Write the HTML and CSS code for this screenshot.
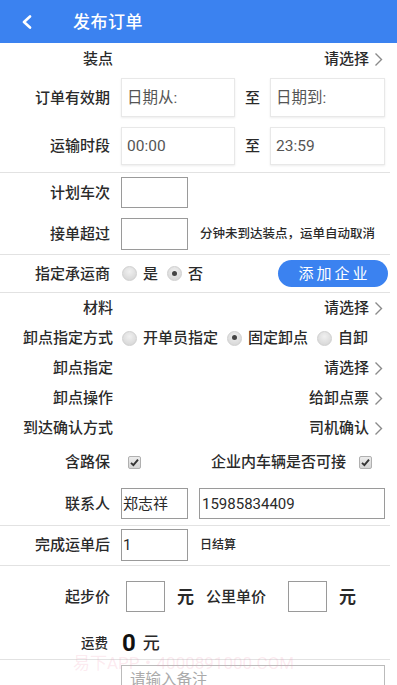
FILE: index.html
```html
<!DOCTYPE html>
<html lang="zh">
<head>
<meta charset="utf-8">
<title>发布订单</title>
<link rel="stylesheet" href="styles.css">
</head>
<body>
<div class="page">
  <header class="header">
    <svg class="back" width="12" height="14" viewBox="0 0 12 14"><polyline points="9,1.5 3,7 9,12.5" fill="none" stroke="#fff" stroke-width="2.6" stroke-linecap="round" stroke-linejoin="round"/></svg>
    <div class="title">发布订单</div>
  </header>

  <div class="sel-row first">
    <div class="lbl w113">装点</div>
    <div class="val">请选择<svg class="chev" width="9" height="15" viewBox="0 0 9 15"><polyline points="1.5,1.5 7.5,7.5 1.5,13.5" fill="none" stroke="#8a8a8a" stroke-width="1.4"/></svg></div>
  </div>

  <div class="pair-row r1">
    <div class="lbl">订单有效期</div>
    <div class="box soft b1">日期从:</div>
    <div class="to">至</div>
    <div class="box soft b2">日期到:</div>
  </div>
  <div class="pair-row r2">
    <div class="lbl">运输时段</div>
    <div class="box soft b1">00:00</div>
    <div class="to">至</div>
    <div class="box soft b2">23:59</div>
  </div>

  <div class="sep s1"></div>

  <div class="in-row r3">
    <div class="lbl">计划车次</div>
    <div class="box hard small"></div>
  </div>
  <div class="in-row r4">
    <div class="lbl">接单超过</div>
    <div class="box hard small"></div>
    <div class="note">分钟未到达装点，运单自动取消</div>
  </div>

  <div class="sep s2"></div>

  <div class="carrier-row">
    <div class="lbl">指定承运商</div>
    <div class="radios">
      <span class="radio"></span><span class="rtext">是</span>
      <span class="radio on"></span><span class="rtext">否</span>
    </div>
    <div class="btn">添加企业</div>
  </div>

  <div class="sep"></div>

  <div class="sel-row">
    <div class="lbl w113">材料</div>
    <div class="val">请选择<svg class="chev" width="9" height="15" viewBox="0 0 9 15"><polyline points="1.5,1.5 7.5,7.5 1.5,13.5" fill="none" stroke="#8a8a8a" stroke-width="1.4"/></svg></div>
  </div>
  <div class="sel-row">
    <div class="lbl w113">卸点指定方式</div>
    <div class="radios wide">
      <span class="radio"></span><span class="rtext">开单员指定</span>
      <span class="radio on"></span><span class="rtext">固定卸点</span>
      <span class="radio"></span><span class="rtext">自卸</span>
    </div>
  </div>
  <div class="sel-row">
    <div class="lbl w113">卸点指定</div>
    <div class="val">请选择<svg class="chev" width="9" height="15" viewBox="0 0 9 15"><polyline points="1.5,1.5 7.5,7.5 1.5,13.5" fill="none" stroke="#8a8a8a" stroke-width="1.4"/></svg></div>
  </div>
  <div class="sel-row">
    <div class="lbl w113">卸点操作</div>
    <div class="val">给卸点票<svg class="chev" width="9" height="15" viewBox="0 0 9 15"><polyline points="1.5,1.5 7.5,7.5 1.5,13.5" fill="none" stroke="#8a8a8a" stroke-width="1.4"/></svg></div>
  </div>
  <div class="sel-row">
    <div class="lbl w113">到达确认方式</div>
    <div class="val">司机确认<svg class="chev" width="9" height="15" viewBox="0 0 9 15"><polyline points="1.5,1.5 7.5,7.5 1.5,13.5" fill="none" stroke="#8a8a8a" stroke-width="1.4"/></svg></div>
  </div>

  <div class="check-row">
    <div class="lbl">含路保</div>
    <span class="check c1"><svg width="13" height="13" viewBox="0 0 13 13"><polyline points="3,6.8 5.4,9.2 10,3.6" fill="none" stroke="#333" stroke-width="1.9"/></svg></span>
    <span class="ctext">企业内车辆是否可接</span>
    <span class="check c2"><svg width="13" height="13" viewBox="0 0 13 13"><polyline points="3,6.8 5.4,9.2 10,3.6" fill="none" stroke="#333" stroke-width="1.9"/></svg></span>
  </div>

  <div class="in-row r5">
    <div class="lbl">联系人</div>
    <div class="box hard small txt">郑志祥</div>
    <div class="box hard phone txt">15985834409</div>
  </div>

  <div class="sep s3"></div>

  <div class="in-row r6">
    <div class="lbl">完成运单后</div>
    <div class="box hard small txt">1</div>
    <div class="note day">日结算</div>
  </div>

  <div class="sep s4"></div>

  <div class="price-row">
    <div class="lbl">起步价</div>
    <div class="box hard pbox p1"></div>
    <span class="yuan">元</span>
    <span class="plabel">公里单价</span>
    <div class="box hard pbox p2"></div>
    <span class="yuan">元</span>
  </div>

  <div class="fee-row">
    <div class="lbl fee-lbl">运费</div>
    <span class="fee">0</span>
    <span class="fee-unit">元</span>
  </div>

  <div class="sep"></div>

  <div class="remark-row">
    <div class="box hard remark">请输入备注</div>
  </div>

  <div class="watermark">易下APP・4000891000.COM</div>
</div>
</body>
</html>
```

FILE: styles.css
```css
html, body {
  margin: 0;
  padding: 0;
  background: #fff;
}
body {
  font-family: Roboto, "Noto Sans CJK SC", sans-serif;
  color: #2a2a2a;
  font-size: 15px;
  line-height: 20px;
  font-weight: 500;
  width: 397px;
  height: 685px;
  overflow: hidden;
}
.page {
  position: relative;
  width: 397px;
}
.header {
  height: 43px;
  background: #3b82f0;
  display: flex;
  align-items: center;
  color: #fff;
}
.back {
  margin-left: 21px;
  flex: none;
}
.title {
  margin-left: 40px;
  font-size: 17px;
  font-weight: 500;
  letter-spacing: 0.5px;
}
.lbl {
  width: 110px;
  flex: none;
  text-align: right;
  font-size: 15px;
  line-height: 20px;
}
.lbl.w113 {
  width: 113px;
}
.sel-row {
  display: flex;
  align-items: center;
  height: 30px;
  padding-right: 14px;
}
.sel-row.first {
  margin-top: 1px;
}
.val {
  margin-left: auto;
  display: flex;
  align-items: center;
  gap: 5px;
  font-size: 15px;
  line-height: 20px;
}
.chev {
  flex: none;
}
.pair-row {
  display: flex;
  align-items: center;
}
.pair-row.r1 {
  margin-top: 4px;
  height: 39px;
}
.pair-row.r2 {
  margin-top: 10px;
  height: 38px;
}
.box {
  box-sizing: border-box;
  flex: none;
  display: flex;
  align-items: center;
}
.box.soft {
  height: 100%;
  border: 1px solid #e8e8e8;
  box-shadow: 0 1px 2px rgba(0, 0, 0, 0.08);
  padding-left: 5px;
  color: #555;
  font-size: 15.5px;
  font-weight: 400;
}
.pair-row .b1 {
  margin-left: 11px;
  width: 114px;
}
.to {
  width: 35px;
  text-align: center;
  font-size: 15px;
}
.pair-row .b2 {
  width: 115px;
}
.sep {
  height: 1px;
  background: #e2e2e2;
  margin-right: 7px;
}
.sep.s1 {
  margin-top: 7px;
}
.sep.s2 {
  margin-top: 4px;
}
.sep.s3 {
  margin-top: 6px;
}
.sep.s4 {
  margin-top: 4px;
}
.in-row {
  display: flex;
  align-items: center;
}
.box.hard {
  border: 1px solid #9a9a9a;
  background: #fff;
}
.box.small {
  margin-left: 11px;
  width: 67px;
  height: 100%;
}
.in-row.r3 {
  margin-top: 4px;
  height: 31px;
}
.in-row.r4 {
  margin-top: 10px;
  height: 32px;
}
.note {
  margin-left: 12px;
  font-size: 12.5px;
}
.note.day {
  font-size: 12px;
}
.carrier-row {
  display: flex;
  align-items: center;
  height: 37px;
}
.radios {
  display: flex;
  align-items: center;
  margin-left: 12px;
}
.radios.wide {
  margin-left: 9px;
}
.radio {
  width: 15px;
  height: 15px;
  border-radius: 50%;
  box-sizing: border-box;
  background: radial-gradient(circle at 50% 35%, #f0f0f0, #d2d2d2);
  border: 1px solid #d0d0d0;
  flex: none;
  position: relative;
}
.radio.on::after {
  content: "";
  position: absolute;
  left: 4px;
  top: 3.5px;
  width: 5px;
  height: 5px;
  border-radius: 50%;
  background: #444;
}
.rtext {
  margin-left: 6px;
  margin-right: 9px;
  font-size: 15px;
}
.btn {
  margin-left: auto;
  margin-right: 9px;
  width: 110px;
  height: 27px;
  border-radius: 14px;
  background: #3b82f0;
  color: #fff;
  font-size: 15px;
  font-weight: 400;
  letter-spacing: 3px;
  display: flex;
  align-items: center;
  justify-content: center;
  padding-left: 3px;
  box-sizing: border-box;
}
.check-row {
  display: flex;
  align-items: center;
  height: 38px;
}
.check {
  width: 13px;
  height: 13px;
  box-sizing: border-box;
  border: 1px solid #b0b0b0;
  border-radius: 2px;
  background: linear-gradient(#ececec, #d4d4d4);
  display: flex;
  flex: none;
  position: relative;
}
.check svg {
  position: absolute;
  left: -1px;
  top: -1px;
}
.check.c1 {
  margin-left: 18px;
}
.ctext {
  margin-left: 70px;
  font-size: 15px;
}
.check.c2 {
  margin-left: 13px;
}
.in-row.r5 {
  margin-top: 7px;
  height: 31px;
}
.txt {
  font-size: 15px;
  font-weight: 400;
  padding-left: 1px;
}
.box.phone {
  margin-left: 11px;
  width: 186px;
  height: 100%;
  padding-left: 2px;
}
.in-row.r6 {
  margin-top: 3px;
  height: 32px;
}
.price-row {
  display: flex;
  align-items: center;
  margin-top: 15px;
  height: 31px;
}
.box.pbox {
  width: 39px;
  height: 100%;
}
.box.p1 {
  margin-left: 16px;
}
.yuan {
  margin-left: 12px;
  font-size: 17px;
  font-weight: 700;
}
.plabel {
  margin-left: 12px;
  font-size: 15px;
}
.box.p2 {
  margin-left: 22px;
}
.fee-row {
  display: flex;
  align-items: center;
  margin-top: 15px;
  height: 32px;
}
.fee-lbl {
  width: 108px;
  font-size: 13.5px;
}
.fee {
  margin-left: 14px;
  font-size: 24px;
  font-weight: 700;
  color: #111;
  line-height: 1;
}
.fee-unit {
  margin-left: 7px;
  font-size: 17px;
}
.remark-row {
  display: flex;
  padding-left: 121px;
  margin-top: 5px;
}
.box.remark {
  width: 264px;
  height: 40px;
  align-items: flex-start;
  padding: 4px 0 0 8px;
  color: #aaa;
  font-size: 15.5px;
  font-weight: 400;
  border-color: #bbb;
}
.watermark {
  position: absolute;
  left: 73px;
  top: 655px;
  font-size: 17px;
  line-height: 17px;
  font-weight: 400;
  color: rgba(240, 150, 180, 0.2);
  pointer-events: none;
  white-space: nowrap;
}
```
